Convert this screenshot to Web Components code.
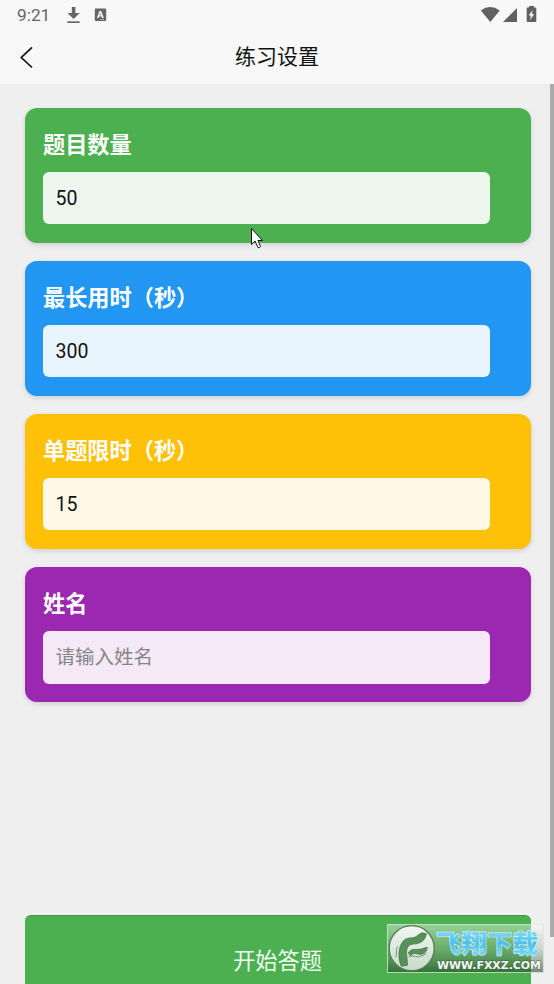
<!DOCTYPE html>
<html lang="zh-CN">
<head>
<meta charset="utf-8">
<title>练习设置</title>
<style>
html,body{margin:0;height:984px;overflow:hidden;background:#efefef}
body{font-family:Roboto,"Noto Sans CJK SC",sans-serif}
</style>
</head>
<body>
<practice-app></practice-app>
<script>
function define(name, html) {
  customElements.define(name, class extends HTMLElement {
    constructor() {
      super();
      const t = document.createElement('template');
      t.innerHTML = html;
      this.attachShadow({mode: 'open'}).append(t.content.cloneNode(true));
    }
  });
}

define('status-bar', `
<style>
:host{display:flex;height:30px;align-items:center;padding:0 17px 0 17px;color:#666;font-size:17.300px;box-sizing:border-box}
span{width:49px;line-height:20px}
.space{flex:1}
svg{display:block}
</style>
<span>9:21</span>
<svg width="58" height="30" fill="#666"><path d="M5.800 7h3.600v6h4.300l-6.100 6-6.100-6h4.300z"/><path d="M1.300 21.300h12.300v1.700H1.300z"/><path fill-rule="evenodd" d="M29.800 8.500h9.400q1 0 1 1v10.600q0 1-1 1h-9.400q-1 0-1-1V9.500q0-1 1-1zM33.500 11l-2.600 7h1.700l.500-1.500h2.500l.500 1.500h1.700l-2.600-7zm.800 1.900.8 2.300h-1.600zM34.500 19v.8h1.200V19zm2.200 0v.8h1.200V19z"/></svg>
<div class="space"></div>
<svg width="57" height="30" fill="#616161"><path d="M.8 10.500Q10 3.700 19.800 10.500L10.300 22z"/><path d="M37 8v14H23z"/><path d="M49 7.500V6h5v1.500h1.500q.8 0 .8.800v12.900q0 .8-.8.800h-8q-.8 0-.8-.8V8.300q0-.8.800-.8z"/><path fill="#f8f8f8" d="m52.500 10-3.800 5.500h2.100l-.600 4.500 3.900-6h-2.200z"/></svg>
`);

define('nav-bar', `
<style>
:host{display:grid;grid-template-columns:54px 1fr 54px;height:54px;align-items:center;font-size:21px;color:#111}
svg{display:block}
h1{font:inherit;margin:0;text-align:center;line-height:30px}
</style>
<svg width="54" height="54" fill="none" stroke="#111" stroke-width="1.700"><path d="M32 17.300 21.300 27.500 32 37.500"/></svg>
<h1><slot></slot></h1>
`);

define('setting-card', `
<style>
:host{display:block;box-sizing:border-box;height:134.600px;padding:18.500px;border-radius:12px;background:var(--tone);box-shadow:0 2px 5px rgba(0,0,0,.13);color:#fff}
.label{height:36px;line-height:36px;font-size:22.200px;font-weight:700;margin-bottom:9.500px}
.field{box-sizing:border-box;width:447px;height:52.300px;border-radius:6px;background:rgba(255,255,255,.9);padding:0 12.500px;line-height:54px;font-size:19.500px;color:#111}
:host([empty]) .field{color:#858585}
</style>
<div class="label"><slot name="label"></slot></div>
<div class="field"><slot></slot></div>
`);

define('start-button', `
<style>
:host{display:block;box-sizing:border-box;height:93px;border-radius:6px;background:#4caf50;border-top:1px solid #429746;color:#f0fff0;text-align:center;font-size:22.200px;line-height:91px}
</style><slot></slot>
`);

define('site-mark', `
<style>
:host{display:block;width:157px;height:49px}
svg{display:block}
</style>
<svg width="157" height="49" viewBox="0 0 157 49">
<defs>
<linearGradient id="g" x2="0" y2="1"><stop stop-color="#fff" stop-opacity=".42"/><stop offset=".45" stop-color="#a0b5a0" stop-opacity=".4"/><stop offset="1" stop-color="#203a22" stop-opacity=".55"/></linearGradient>
<linearGradient id="b" x2="0" y2="1"><stop stop-color="#a5e8fb"/><stop offset=".55" stop-color="#4cc0ea"/><stop offset="1" stop-color="#8ae2f7"/></linearGradient>
<linearGradient id="c" x2="0" y2="1"><stop stop-color="#f2f5f2"/><stop offset="1" stop-color="#c5dcc6"/></linearGradient>
</defs>
<rect x=".5" y=".5" width="156" height="48" fill="url(#g)" stroke="#d5ead5" stroke-opacity=".8"/>
<circle cx="24.700" cy="24.200" r="22.500" fill="url(#c)" stroke="#557957" stroke-width="1.300"/>
<g transform="translate(-3 -4) scale(.33333)" fill="#559259" stroke="#41604a" stroke-width="2" stroke-linejoin="round">
<path d="M52 139C42 118 43 88 52 72C60 55 72 54 86 53C98 53 103 41 115 38L127 41C125 57 116 66 102 70C88 74 78 70 71 82C63 96 72 117 70 136Z"/>
<path d="M73 99C80 85 93 89 105 88C114 88 121 83 130 82C128 96 119 104 106 103C97 101 87 98 79 107Z"/>
<path fill="none" d="M42 79C33 90 41 101 35 112M74 111C87 103 95 114 109 109Q120 106 128 99"/>
</g>
<text x="49" y="28.500" font-family="Noto Sans CJK SC,sans-serif" font-weight="900" font-size="25" textLength="102" lengthAdjust="spacingAndGlyphs" fill="url(#b)" stroke="#e2f8ff" stroke-width="1" paint-order="stroke">飞翔下载</text>
<text x="50" y="44.500" font-family="DejaVu Sans,sans-serif" font-weight="700" font-size="10.500" textLength="104" lengthAdjust="spacingAndGlyphs" fill="#f4f8f4" stroke="#456047" stroke-width=".8" paint-order="stroke">WWW.FXXZ.COM</text>
</svg>
`);

define('practice-app', `
<style>
:host{display:block;position:relative;width:554px;height:984px;overflow:hidden;background:#efefef}
header{height:84px;background:#f8f8f8}
main{display:flex;flex-direction:column;gap:18.500px;padding:24px 23.500px 0 24.500px}
start-button{margin-top:194.500px}
.scroll{position:absolute;right:0;top:84px;width:4px;height:853px;background:#ababab}
site-mark{position:absolute;left:387px;top:924px}
.cursor{position:absolute;left:250px;top:227px}
</style>
<header><status-bar></status-bar><nav-bar>练习设置</nav-bar></header>
<main>
<setting-card style="--tone:#4caf50"><span slot="label">题目数量</span>50</setting-card>
<setting-card style="--tone:#2196f3"><span slot="label">最长用时（秒）</span>300</setting-card>
<setting-card style="--tone:#ffc107"><span slot="label">单题限时（秒）</span>15</setting-card>
<setting-card empty style="--tone:#9c27b0"><span slot="label">姓名</span>请输入姓名</setting-card>
<start-button>开始答题</start-button>
</main>
<div class="scroll"></div>
<svg class="cursor" width="14" height="24"><path fill="#fff" stroke="#111" d="M1.500 1.500v16l3.500-3.500 3 6.500q1.500 1 2.500-1L8 13.500h4.500z"/></svg>
<site-mark></site-mark>
`);
</script>
</body>
</html>
